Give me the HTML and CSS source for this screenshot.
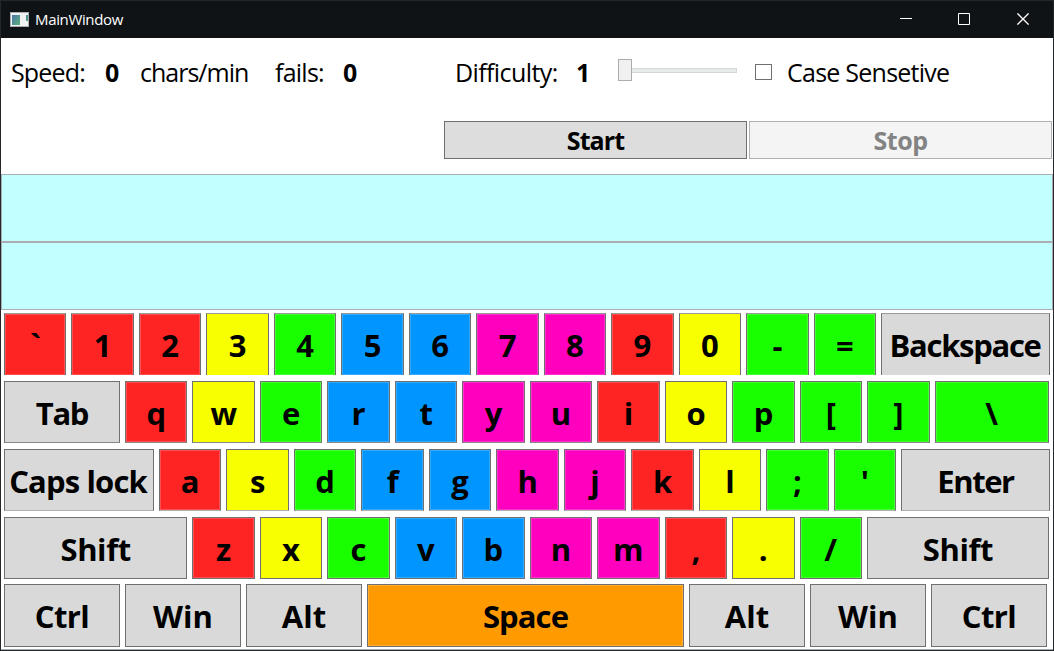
FILE: index.html
```
<!DOCTYPE html>
<html lang="en">
<head>
<meta charset="utf-8">
<title>MainWindow</title>
<link rel="stylesheet" href="styles.css">
</head>
<body>
<div class="window">
  <header class="titlebar">
    <svg class="app-icon" width="19" height="15" viewBox="0 0 19 15">
      <defs><linearGradient id="g" x1="0" y1="0" x2="1" y2="1"><stop offset="0" stop-color="#4b78ad"/><stop offset="1" stop-color="#5cae77"/></linearGradient></defs>
      <rect width="19" height="15" fill="#a9adb0"/>
      <rect x="1" y="1" width="17" height="13" fill="#f1f2f3"/>
      <rect x="2" y="3" width="8" height="10" fill="url(#g)"/>
      <rect x="16" y="3" width="2" height="6" fill="url(#g)"/>
    </svg>
    <span class="title">MainWindow</span>
    <div class="controls">
      <svg width="12" height="12" viewBox="0 0 12 12"><path d="M0 5.5H12"/></svg>
      <svg width="12" height="12" viewBox="0 0 12 12"><path d="M.5 .5H11.5V11.5H.5Z"/></svg>
      <svg width="12" height="12" viewBox="0 0 12 12"><path class="cross" d="M.4 .4L11.6 11.6M11.6 .4L.4 11.6"/></svg>
    </div>
  </header>
  <main class="content">
    <section class="status">
      <span class="label speed">Speed:</span><b class="value v-speed">0</b>
      <span class="label unit">chars/min</span><span class="label fails">fails:</span><b class="value v-fails">0</b>
      <span class="label difficulty">Difficulty:</span><b class="value v-diff">1</b>
      <div class="slider"><span class="thumb"></span><span class="track"></span></div>
      <span class="checkbox"></span><span class="label case">Case Sensetive</span>
    </section>
    <section class="actions">
      <div class="button start">Start</div><div class="button disabled">Stop</div>
    </section>
    <div class="line"></div>
    <div class="line"></div>
    <section class="keyboard">
      <div class="row r1">
        <div class="key red">`</div><div class="key red">1</div><div class="key red">2</div><div class="key yellow">3</div><div class="key green">4</div><div class="key blue">5</div><div class="key blue">6</div><div class="key pink">7</div><div class="key pink">8</div><div class="key red">9</div><div class="key yellow">0</div><div class="key green">-</div><div class="key green">=</div><div class="key backspace">Backspace</div>
      </div>
      <div class="row r2">
        <div class="key mod tab">Tab</div><div class="key red">q</div><div class="key yellow">w</div><div class="key green">e</div><div class="key blue">r</div><div class="key blue">t</div><div class="key pink">y</div><div class="key pink">u</div><div class="key red">i</div><div class="key yellow">o</div><div class="key green">p</div><div class="key green">[</div><div class="key green">]</div><div class="key green backslash">\</div>
      </div>
      <div class="row r3">
        <div class="key caps">Caps lock</div><div class="key red">a</div><div class="key yellow">s</div><div class="key green">d</div><div class="key blue">f</div><div class="key blue">g</div><div class="key pink">h</div><div class="key pink">j</div><div class="key red">k</div><div class="key yellow">l</div><div class="key green">;</div><div class="key green">'</div><div class="key enter">Enter</div>
      </div>
      <div class="row r4">
        <div class="key shift">Shift</div><div class="key red">z</div><div class="key yellow">x</div><div class="key green">c</div><div class="key blue">v</div><div class="key blue">b</div><div class="key pink">n</div><div class="key pink">m</div><div class="key red">,</div><div class="key yellow">.</div><div class="key green">/</div><div class="key shift-right">Shift</div>
      </div>
      <div class="row r5">
        <div class="key mod ctrl">Ctrl</div><div class="key mod">Win</div><div class="key mod">Alt</div><div class="key space">Space</div><div class="key mod">Alt</div><div class="key mod">Win</div><div class="key mod ctrl">Ctrl</div>
      </div>
    </section>
  </main>
</div>
</body>
</html>
```
FILE: styles.css
```
* { box-sizing: border-box; }
body { margin: 0; background: #fff; font-family: "Open Sans", "Noto Sans", sans-serif; color: #000; }
.window { width: 1054px; height: 651px; border: 1px solid #24272a; overflow: hidden; background: #fff; }
.titlebar { height: 37px; background: #0f1316; display: flex; align-items: center; padding-left: 9px; color: #fff; }
.app-icon { display: block; margin-top: -1px; }
.title { font-size: 15px; margin: -1px 0 0 6px; line-height: 20px; letter-spacing: -.35px; }
.controls { margin-left: auto; display: flex; gap: 47px; padding-right: 24px; }
.controls svg { display: block; margin-top: -1px; fill: none; stroke: #fff; stroke-width: 1; }
.controls svg:first-child { margin-right: -1px; }
.cross { stroke-width: 1.3; }
.content { height: 612px; border-bottom: 1px solid #aaadb0; display: flex; flex-direction: column; }
.status { height: 83px; padding-left: 10px; display: flex; font-size: 25px; line-height: 69px; white-space: nowrap; }
.label, .value { flex: none; }
.speed { width: 94px; letter-spacing: -.85px; }
.v-speed { width: 35px; }
.unit { width: 135px; letter-spacing: -1px; }
.fails { width: 68px; letter-spacing: -.75px; }
.v-fails { width: 112px; }
.difficulty { width: 121px; letter-spacing: -.6px; }
.v-diff { width: 42px; }
.case { letter-spacing: -.75px; }
.slider { width: 119px; height: 22px; margin-top: 21px; display: flex; align-items: center; }
.thumb { width: 14px; height: 22px; border: 1px solid #acacac; background: #f0f0f0; }
.track { flex: 1; height: 5px; border: 1px solid #d6d6d6; border-left: 0; background: #e7eaea; }
.checkbox { width: 17px; height: 16px; border: 1px solid #707070; margin: 26px 15px 0 18px; }
.actions { height: 53px; display: flex; justify-content: flex-end; gap: 2px; padding-right: 1px; }
.button { width: 303px; height: 38px; border: 1px solid #707070; background: #ddd; font-size: 25px; font-weight: 700; line-height: 37px; text-align: center; }
.start { letter-spacing: -.9px; }
.disabled { border-color: #adb2b5; background: #f4f4f4; color: #838383; letter-spacing: -.5px; }
.line { height: 68px; border: 1px solid #abadb3; background: #c2ffff; flex: none; }
.keyboard { padding: 3px 0 0 3px; display: flex; flex-direction: column; gap: 6px; }
.row { display: flex; gap: 5px; height: 62px; }
.key { flex: none; width: 62.47px; border: 1px solid #707070; background: #d9d9d9; font-size: 31px; font-weight: 700; line-height: 63px; text-align: center; white-space: nowrap; }
.red { background: #ff2424; }
.yellow { background: #f7ff00; }
.green { background: #1aff00; }
.blue { background: #0095ff; }
.pink { background: #ff00bf; }
.space { background: #ff9b00; width: 317px; letter-spacing: -.9px; }
.red, .green, .blue, .pink, .space { box-shadow: inset 0 0 0 1px rgba(255, 255, 255, .2); }
.mod { width: 116px; }
.tab { letter-spacing: -1.3px; }
.ctrl { letter-spacing: -.6px; }
.backspace { width: 169px; letter-spacing: -1.3px; padding-right: 1px; }
.backslash { width: 114.3px; }
.caps { width: 150px; letter-spacing: -.85px; padding-right: 2px; }
.enter { width: 148.7px; letter-spacing: -1.4px; }
.shift { width: 183.3px; letter-spacing: -.4px; }
.shift-right { width: 182px; letter-spacing: -.4px; }
.r1 .key { border-top-color: #989898; border-bottom: 0; }
.r2 .key { border-bottom-color: #888; }
.r3 .key { border-bottom-color: #b0b0b0; }
.r5 { height: 63px; margin-top: -1px; }
```
